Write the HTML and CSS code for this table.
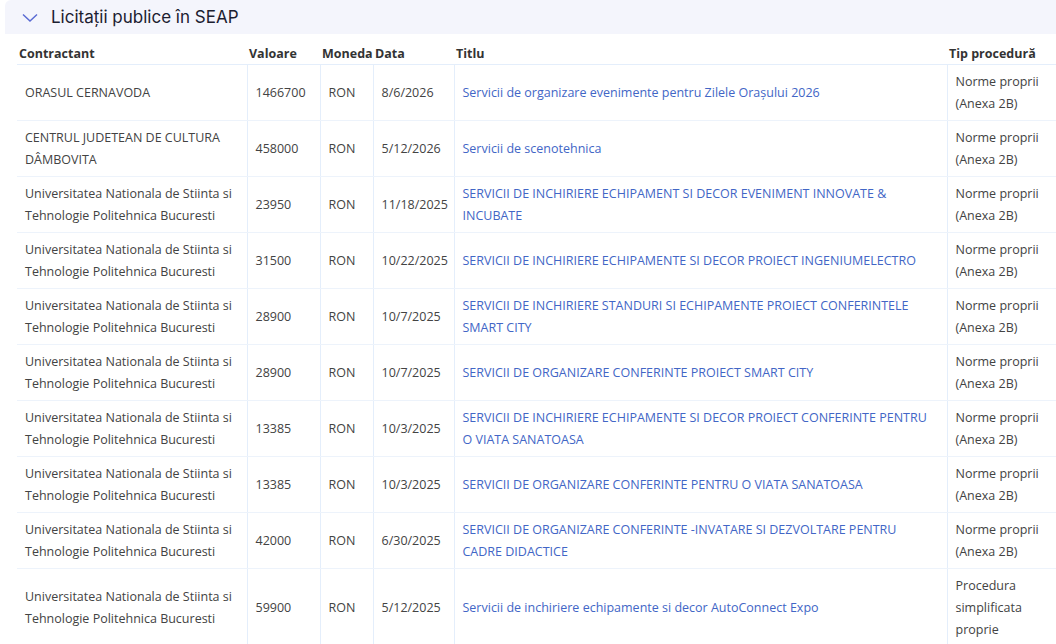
FILE: index.html
```html
<!DOCTYPE html>
<html lang="ro">
<head>
<meta charset="utf-8">
<title>Licitații publice în SEAP</title>
<link rel="stylesheet" href="styles.css">
</head>
<body>
<section class="panel">
  <header class="panel-head">
    <svg class="chev" width="16" height="10" viewBox="0 0 16 10"><path d="M1 1.5 L8 8 L15 1.5" fill="none" stroke="#5a6bd3" stroke-width="1.5"/></svg>
    <h2 class="panel-title">Licitații publice în SEAP</h2>
  </header>
  <div class="table-wrap">
    <table class="tbl">
      <colgroup>
        <col class="c-contr"><col class="c-val"><col class="c-mon"><col class="c-data"><col class="c-titlu"><col class="c-tip">
      </colgroup>
      <thead>
        <tr><th>Contractant</th><th>Valoare</th><th>Moneda</th><th>Data</th><th>Titlu</th><th>Tip procedură</th></tr>
      </thead>
      <tbody>
        <tr><td>ORASUL CERNAVODA</td><td>1466700</td><td>RON</td><td>8/6/2026</td><td><a href="#">Servicii de organizare evenimente pentru Zilele Orașului 2026</a></td><td>Norme proprii (Anexa 2B)</td></tr>
        <tr><td>CENTRUL JUDETEAN DE CULTURA DÂMBOVITA</td><td>458000</td><td>RON</td><td>5/12/2026</td><td><a href="#">Servicii de scenotehnica</a></td><td>Norme proprii (Anexa 2B)</td></tr>
        <tr><td>Universitatea Nationala de Stiinta si Tehnologie Politehnica Bucuresti</td><td>23950</td><td>RON</td><td>11/18/2025</td><td><a href="#">SERVICII DE INCHIRIERE ECHIPAMENT SI DECOR EVENIMENT INNOVATE &amp; INCUBATE</a></td><td>Norme proprii (Anexa 2B)</td></tr>
        <tr><td>Universitatea Nationala de Stiinta si Tehnologie Politehnica Bucuresti</td><td>31500</td><td>RON</td><td>10/22/2025</td><td><a href="#">SERVICII DE INCHIRIERE ECHIPAMENTE SI DECOR PROIECT INGENIUMELECTRO</a></td><td>Norme proprii (Anexa 2B)</td></tr>
        <tr><td>Universitatea Nationala de Stiinta si Tehnologie Politehnica Bucuresti</td><td>28900</td><td>RON</td><td>10/7/2025</td><td><a href="#">SERVICII DE INCHIRIERE STANDURI SI ECHIPAMENTE PROIECT CONFERINTELE SMART CITY</a></td><td>Norme proprii (Anexa 2B)</td></tr>
        <tr><td>Universitatea Nationala de Stiinta si Tehnologie Politehnica Bucuresti</td><td>28900</td><td>RON</td><td>10/7/2025</td><td><a href="#">SERVICII DE ORGANIZARE CONFERINTE PROIECT SMART CITY</a></td><td>Norme proprii (Anexa 2B)</td></tr>
        <tr><td>Universitatea Nationala de Stiinta si Tehnologie Politehnica Bucuresti</td><td>13385</td><td>RON</td><td>10/3/2025</td><td><a href="#">SERVICII DE INCHIRIERE ECHIPAMENTE SI DECOR PROIECT CONFERINTE PENTRU O VIATA SANATOASA</a></td><td>Norme proprii (Anexa 2B)</td></tr>
        <tr><td>Universitatea Nationala de Stiinta si Tehnologie Politehnica Bucuresti</td><td>13385</td><td>RON</td><td>10/3/2025</td><td><a href="#">SERVICII DE ORGANIZARE CONFERINTE PENTRU O VIATA SANATOASA</a></td><td>Norme proprii (Anexa 2B)</td></tr>
        <tr><td>Universitatea Nationala de Stiinta si Tehnologie Politehnica Bucuresti</td><td>42000</td><td>RON</td><td>6/30/2025</td><td><a href="#">SERVICII DE ORGANIZARE CONFERINTE -INVATARE SI DEZVOLTARE PENTRU CADRE DIDACTICE</a></td><td>Norme proprii (Anexa 2B)</td></tr>
        <tr><td>Universitatea Nationala de Stiinta si Tehnologie Politehnica Bucuresti</td><td>59900</td><td>RON</td><td>5/12/2025</td><td><a href="#">Servicii de inchiriere echipamente si decor AutoConnect Expo</a></td><td>Procedura simplificata proprie</td></tr>
      </tbody>
    </table>
  </div>
</section>
</body>
</html>
```

FILE: styles.css
```css
html, body {
  margin: 0;
  padding: 0;
  background: #ffffff;
  overflow: hidden;
}
body {
  font-family: "Segoe UI", "Open Sans", "Noto Sans", sans-serif;
  color: #404040;
}
.panel {
  margin-left: 5px;
}
.panel-head {
  display: flex;
  align-items: center;
  height: 34px;
  background: #f4f5fc;
  border-top-left-radius: 6px;
  padding-left: 17px;
}
.chev {
  display: block;
  margin-right: 13px;
  margin-top: 1px;
}
.panel-title {
  margin: 0;
  font-family: "Segoe UI", Inter, "Noto Sans", sans-serif;
  font-size: 17px;
  font-weight: 400;
  color: #1c2030;
  letter-spacing: 0;
}
.table-wrap {
  padding-left: 12px;
}
.tbl {
  border-collapse: collapse;
  table-layout: fixed;
  width: 1040px;
  font-size: 12.5px;
  line-height: 22px;
}
.c-contr { width: 230px; }
.c-val { width: 73px; }
.c-mon { width: 53px; }
.c-data { width: 81px; }
.c-titlu { width: 493px; }
.c-tip { width: 110px; }
.tbl th {
  text-align: left;
  font-weight: 700;
  color: #333333;
  padding: 9px 2px 0;
  line-height: 21px;
  border-bottom: 1px solid #e4eefb;
  white-space: nowrap;
}
.tbl td {
  padding: 6px 8px 5px;
  vertical-align: middle;
  border-bottom: 1px solid #edf3fb;
  border-left: 1px solid #e4eefb;
  color: #434343;
}
.tbl td:first-child {
  border-left: none;
}
.tbl a {
  color: #4266c6;
  text-decoration: none;
}
```
